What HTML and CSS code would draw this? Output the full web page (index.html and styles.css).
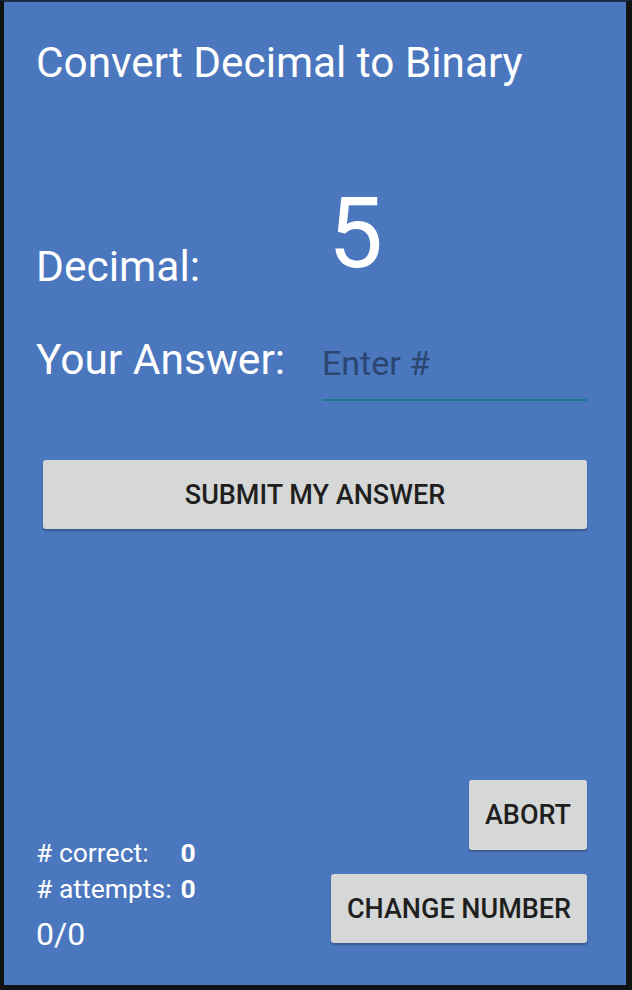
FILE: index.html
```html
<!DOCTYPE html>
<html>
<head>
<meta charset="utf-8">
<link rel="stylesheet" href="styles.css">
</head>
<body>
<div class="frame">
  <div class="screen">
    <h1 class="title">Convert Decimal to Binary</h1>
    <div class="row decimal-row">
      <span class="label">Decimal:</span>
      <span class="number">5</span>
    </div>
    <div class="row answer-row">
      <span class="label">Your Answer:</span>
      <input class="answer" type="text" placeholder="Enter #">
    </div>
    <button class="btn submit">SUBMIT MY ANSWER</button>
    <div class="bottom">
      <div class="stats">
        <div class="stat-grid">
          <span class="stat-label"># correct:</span><span class="stat-val">0</span>
          <span class="stat-label"># attempts:</span><span class="stat-val">0</span>
        </div>
        <div class="ratio">0/0</div>
      </div>
      <div class="actions">
        <button class="btn abort">ABORT</button>
        <button class="btn change">CHANGE NUMBER</button>
      </div>
    </div>
  </div>
</div>
</body>
</html>
```
FILE: styles.css
```css
html, body {
  margin: 0;
  padding: 0;
  background: #111214;
}
.frame {
  width: 632px;
  height: 990px;
  box-sizing: border-box;
  border-top: 2px solid #1e2a42;
  border-left: 4px solid #111214;
  border-right: 6px solid #111214;
  border-bottom: 5px solid #111214;
}
.screen {
  height: 100%;
  background: #4a77bd;
  box-sizing: border-box;
  padding: 0 39px 0 32px;
  display: flex;
  flex-direction: column;
  font-family: Roboto, "Noto Sans", sans-serif;
  color: #ffffff;
}
.title {
  margin: 36px 0 0 0;
  font-weight: 400;
  font-size: 42.3px;
  line-height: 50px;
}
.row {
  display: flex;
  align-items: flex-start;
}
.decimal-row {
  margin-top: 96px;
}
.label {
  font-size: 42.5px;
  line-height: 50px;
  width: 286px;
  flex: none;
}
.decimal-row .label {
  margin-top: 58px;
}
.number {
  font-size: 98px;
  line-height: 100px;
  margin-left: 6px;
}
.answer-row {
  margin-top: 43px;
}
.answer {
  flex: 1;
  min-width: 0;
  margin-top: 8px;
  background: transparent;
  border: none;
  border-bottom: 2px solid #177a87;
  outline: none;
  font-family: Roboto, "Noto Sans", sans-serif;
  font-size: 34px;
  line-height: 40px;
  height: 58px;
  box-sizing: border-box;
  color: #ffffff;
  padding: 0 0 16px 0;
}
.answer::placeholder {
  color: #2b4671;
}
.btn {
  background: #d6d7d7;
  border: none;
  border-radius: 3px;
  box-shadow: 0 2px 2px rgba(0, 0, 0, 0.25);
  font-family: Roboto, "Noto Sans", sans-serif;
  font-weight: 500;
  font-size: 27px;
  color: #1f1f1f;
  padding: 0;
}
.submit {
  margin: 59px 0 0 7px;
  height: 69px;
}
.bottom {
  margin-top: auto;
  margin-bottom: 31px;
  display: flex;
  justify-content: space-between;
  align-items: flex-end;
}
.stats {
  display: flex;
  flex-direction: column;
}
.stat-grid {
  display: grid;
  grid-template-columns: auto auto;
  justify-content: start;
  column-gap: 9px;
  font-size: 26.5px;
  line-height: 36px;
}
.stat-val {
  font-weight: 700;
}
.ratio {
  margin-top: 7px;
  font-size: 32px;
  line-height: 40px;
}
.actions {
  display: flex;
  flex-direction: column;
  align-items: flex-end;
  gap: 24px;
  margin-bottom: 11px;
}
.abort {
  width: 118px;
  height: 70px;
}
.change {
  width: 256px;
  height: 69px;
}
```
